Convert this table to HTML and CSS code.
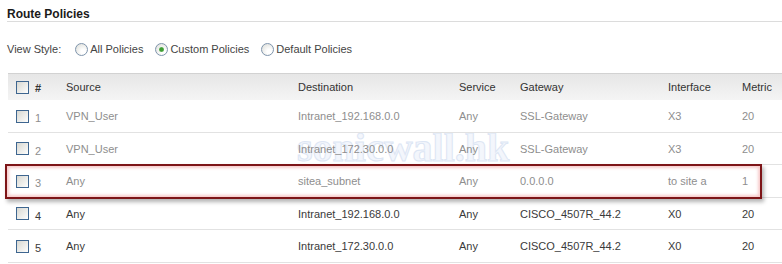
FILE: index.html
```html
<!DOCTYPE html>
<html lang="en">
<head>
  <meta charset="UTF-8">
  <title>Route Policies</title>
  <link rel="stylesheet" href="styles.css">
</head>
<body>
  <div class="page">
    <h1 class="title">Route Policies</h1>

    <div class="view-style">
      <span class="view-label">View Style:</span>
      <label class="option"><span class="radio"></span>All Policies</label>
      <label class="option"><span class="radio checked"></span>Custom Policies</label>
      <label class="option"><span class="radio"></span>Default Policies</label>
    </div>

    <div class="watermark">sonicwall.hk</div>

    <div class="policies">
      <div class="row head">
        <span class="cell"><span class="check"></span></span>
        <span class="cell num">#</span>
        <span class="cell">Source</span>
        <span class="cell">Destination</span>
        <span class="cell">Service</span>
        <span class="cell">Gateway</span>
        <span class="cell">Interface</span>
        <span class="cell">Metric</span>
      </div>

      <div class="row dim">
        <span class="cell"><span class="check"></span></span>
        <span class="cell idx">1</span>
        <span class="cell">VPN_User</span>
        <span class="cell">Intranet_192.168.0.0</span>
        <span class="cell">Any</span>
        <span class="cell">SSL-Gateway</span>
        <span class="cell">X3</span>
        <span class="cell">20</span>
      </div>

      <div class="row dim">
        <span class="cell"><span class="check"></span></span>
        <span class="cell idx">2</span>
        <span class="cell">VPN_User</span>
        <span class="cell">Intranet_172.30.0.0</span>
        <span class="cell">Any</span>
        <span class="cell">SSL-Gateway</span>
        <span class="cell">X3</span>
        <span class="cell">20</span>
      </div>

      <div class="row dim marked">
        <span class="cell"><span class="check"></span></span>
        <span class="cell idx">3</span>
        <span class="cell">Any</span>
        <span class="cell">sitea_subnet</span>
        <span class="cell">Any</span>
        <span class="cell">0.0.0.0</span>
        <span class="cell">to site a</span>
        <span class="cell">1</span>
      </div>

      <div class="row">
        <span class="cell"><span class="check"></span></span>
        <span class="cell idx">4</span>
        <span class="cell">Any</span>
        <span class="cell">Intranet_192.168.0.0</span>
        <span class="cell">Any</span>
        <span class="cell">CISCO_4507R_44.2</span>
        <span class="cell">X0</span>
        <span class="cell">20</span>
      </div>

      <div class="row">
        <span class="cell"><span class="check"></span></span>
        <span class="cell idx">5</span>
        <span class="cell">Any</span>
        <span class="cell">Intranet_172.30.0.0</span>
        <span class="cell">Any</span>
        <span class="cell">CISCO_4507R_44.2</span>
        <span class="cell">X0</span>
        <span class="cell">20</span>
      </div>
    </div>
  </div>
</body>
</html>
```

FILE: styles.css
```css
* {
  margin: 0;
  padding: 0;
  box-sizing: border-box;
}

body {
  background: #fff;
  font-family: 'Liberation Sans', Arial, sans-serif;
  font-size: 11px;
  color: #333;
  overflow: hidden;
}

.page {
  position: relative;
  padding-top: 7px;
}

.title {
  margin-left: 7px;
  height: 15px;
  line-height: 14px;
  font-size: 12px;
  font-weight: bold;
  color: #1a1a1a;
  border-bottom: 1px solid #dcdcdc;
}

.view-style {
  display: flex;
  align-items: center;
  height: 16px;
  margin: 19px 0 16px 7px;
  color: #444;
}

.view-label {
  margin-right: 2px;
}

.option {
  display: flex;
  align-items: center;
  gap: 2px;
  margin-left: 12px;
}

.radio {
  position: relative;
  width: 13px;
  height: 13px;
  border-radius: 50%;
  border: 1px solid #7f95ad;
  background: radial-gradient(circle at 65% 70%, #fff 20%, #dedfda 90%);
}

.radio.checked::after {
  content: "";
  position: absolute;
  left: 3px;
  top: 3px;
  width: 5px;
  height: 5px;
  border-radius: 50%;
  background: radial-gradient(circle, #3f9c35 40%, #8fd08a 100%);
}

.policies {
  position: relative;
  z-index: 1;
  margin-left: 8px;
}

.row {
  display: grid;
  grid-template-columns: 27px 31px 232px 161px 61px 148px 74px 1fr;
  align-items: center;
  height: 32px;
  border-bottom: 1px solid #e2e2e2;
  color: #3a3a3a;
}

.row:nth-child(even) {
  height: 33px;
}

.row.head {
  height: 27px;
  border-top: 1px solid #d2d2d2;
  border-bottom: none;
  background: linear-gradient(#e6e6e6, #eeeeee 55%, #f4f4f4);
  color: #333;
}

.row.dim {
  color: #8e8e8e;
}

.cell {
  white-space: nowrap;
}

.num {
  font-weight: bold;
  padding-top: 2px;
}

.idx {
  padding-top: 4px;
}

.check {
  display: block;
  width: 13px;
  height: 13px;
  margin-left: 8px;
  border: 1px solid #3e6690;
  background: linear-gradient(135deg, #d8d8d2, #f6f6f4 80%, #fff);
}

.marked {
  position: relative;
}

.marked::after {
  content: "";
  position: absolute;
  left: -3px;
  right: 20px;
  top: -1px;
  bottom: -2px;
  border: 2px solid #7d1518;
  box-shadow: 2px 3px 4px rgba(0, 0, 0, 0.3), inset 0 0 3px 2px rgba(240, 160, 160, 0.55);
}

.watermark {
  position: absolute;
  left: 297px;
  top: 128px;
  line-height: 40px;
  font-family: 'Liberation Serif', 'Times New Roman', serif;
  font-size: 40px;
  font-weight: bold;
  color: #f3f6fc;
  -webkit-text-stroke: 1px #dde6f4;
  pointer-events: none;
}
```
